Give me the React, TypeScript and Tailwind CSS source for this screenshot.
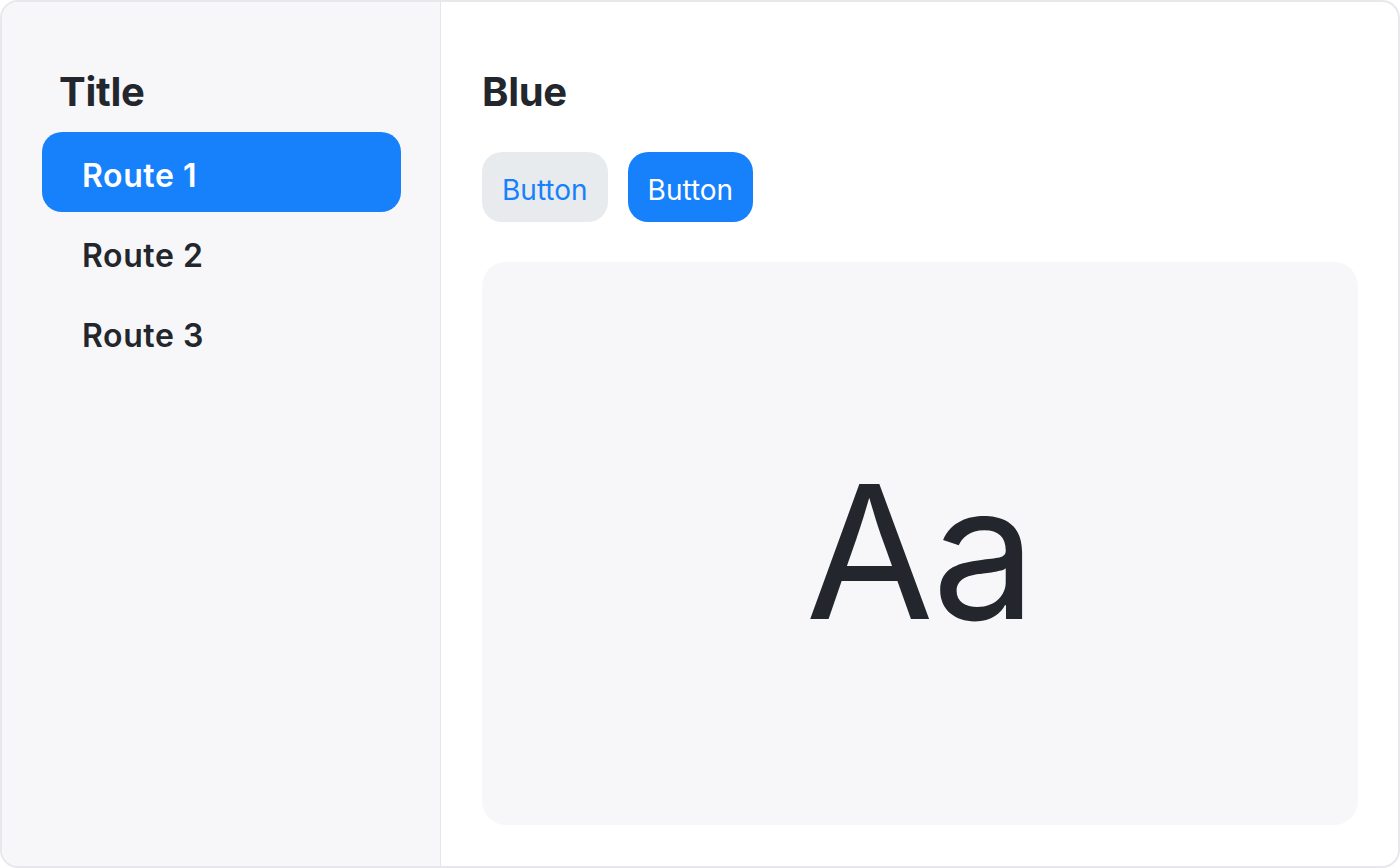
import React from 'react';

const routes = ['Route 1', 'Route 2', 'Route 3'];

export default function App() {
    return (
        <div
            className="w-[1400px] h-[868px] bg-white flex overflow-hidden rounded-[18px] border-2 border-[#e8e8ec] text-[#23272d]"
            style={{ fontFamily: 'Inter, "Noto Sans", sans-serif' }}
        >
            {/* Sidebar */}
            <aside className="w-[439px] shrink-0 bg-[#f7f7fa] border-r border-[#e5e5ea] pt-[66px] pl-[40px] pr-[39px]">
                <h1 className="text-[40px] leading-[48px] font-bold pl-[17px] mb-[16px] tracking-[-0.3px]">Title</h1>
                <nav className="flex flex-col">
                    {routes.map((r, i) => (
                        <div
                            key={r}
                            className={
                                i === 0
                                    ? 'h-[80px] flex items-center pl-[40px] pt-[8px] rounded-[20px] bg-[#1780fb] text-white text-[32px] font-semibold tracking-[0.6px]'
                                    : 'h-[80px] flex items-center pl-[40px] pt-[8px] rounded-[20px] text-[#23272d] text-[32px] font-semibold tracking-[0.6px]'
                            }
                        >
                            {r}
                        </div>
                    ))}
                </nav>
            </aside>

            {/* Main */}
            <main className="flex-1 flex flex-col pt-[66px] pl-[41px] pr-[40px] pb-[41px]">
                <h2 className="text-[40px] leading-[48px] font-bold tracking-[-0.3px]">Blue</h2>
                <div className="flex gap-[20px] mt-[36px]">
                    <button className="h-[70px] px-[20px] pt-[6px] rounded-[20px] bg-[#e8ebee] text-[#1780fb] text-[28px]">Button</button>
                    <button className="h-[70px] px-[20px] pt-[6px] rounded-[20px] bg-[#1780fb] text-white text-[28px]">Button</button>
                </div>
                <div className="flex-1 mt-[40px] rounded-[24px] bg-[#f7f7fa] flex items-center justify-center">
                    <span className="text-[186px] leading-none font-normal tracking-[-2px] translate-y-[8px]">Aa</span>
                </div>
            </main>
        </div>
    );
}
